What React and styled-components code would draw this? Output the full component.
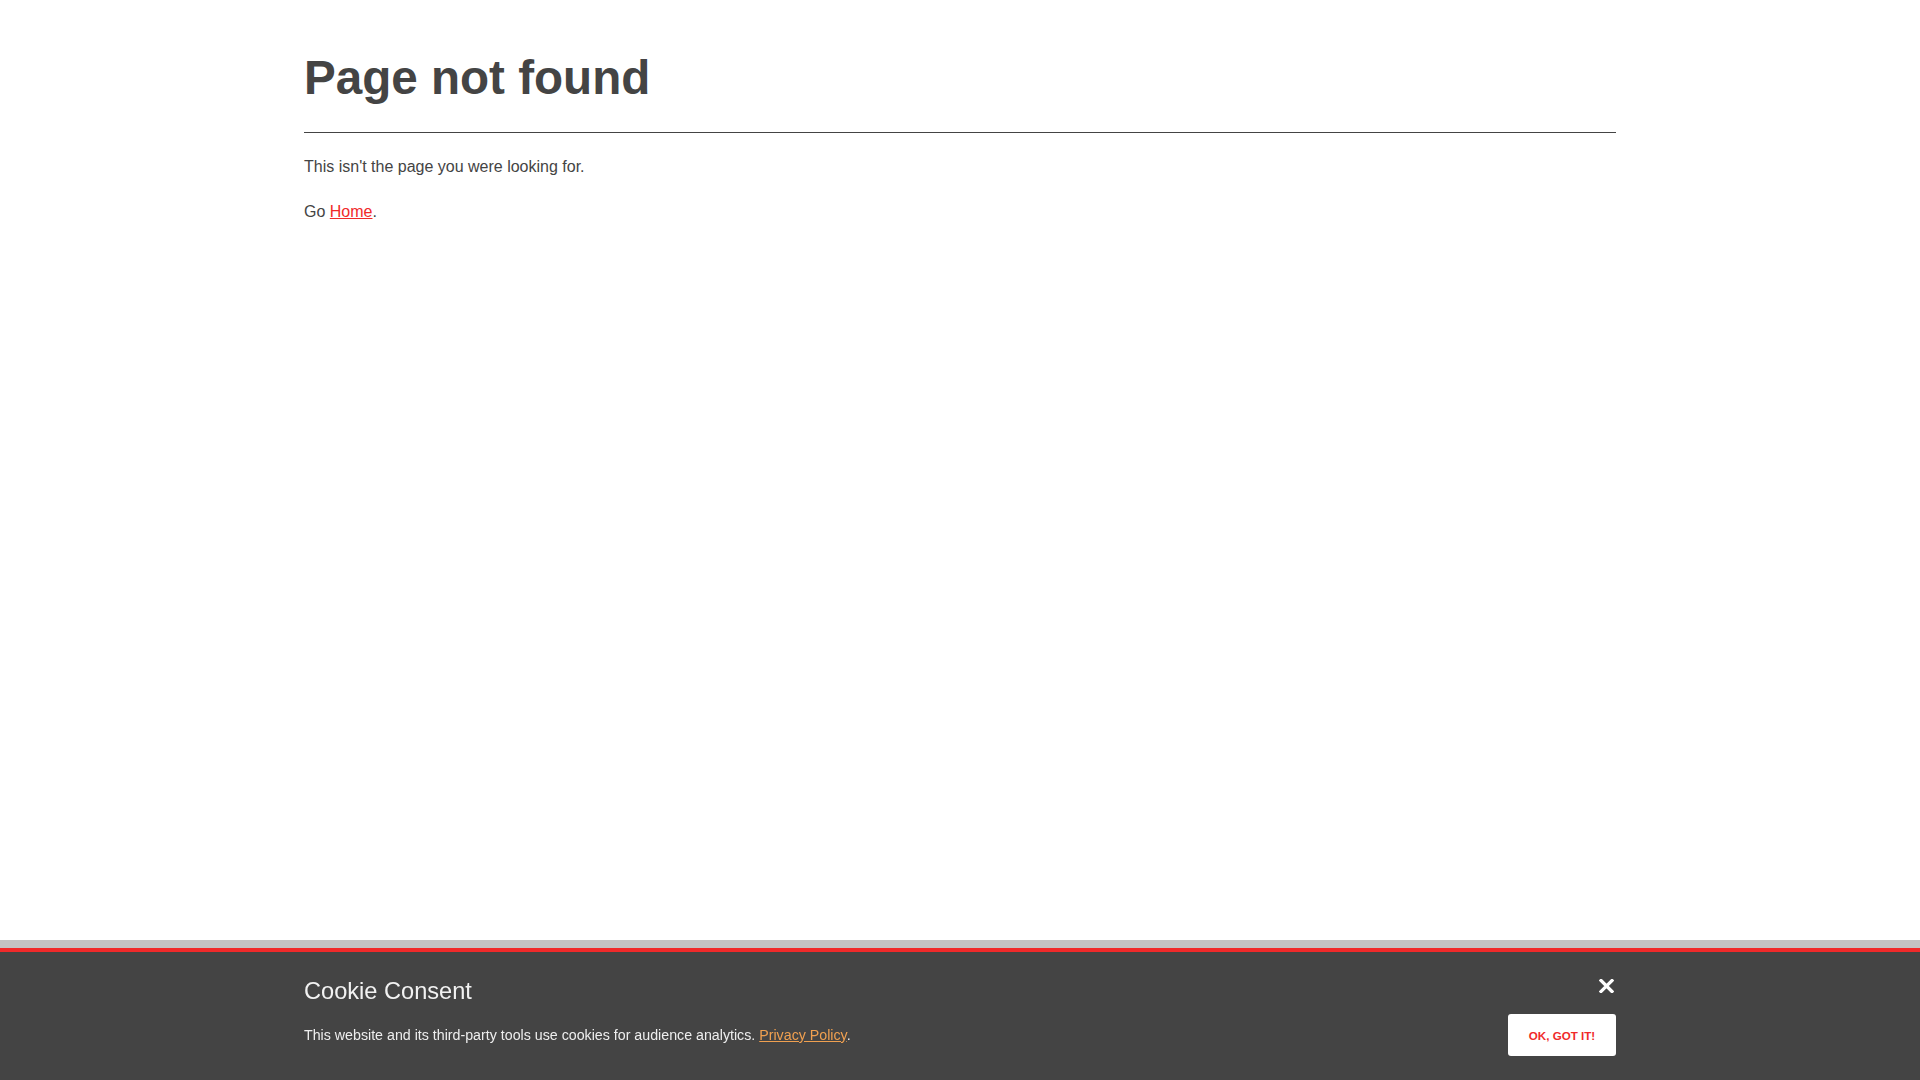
import React from 'react';
import styled, { createGlobalStyle } from 'styled-components';

const GlobalStyle = createGlobalStyle`
  html, body {
    margin: 0;
    padding: 0;
    background: #fff;
    font-family: 'Liberation Sans', Arial, sans-serif;
    color: #444;
  }
`;

const Page = styled.main`
  width: 1312px;
  margin: 0 auto;
  padding-top: 52px;
`;

const Title = styled.h1`
  margin: 0;
  padding-bottom: 28px;
  border-bottom: 1px solid #444;
  font-size: 47.6px;
  line-height: 1.1;
  font-weight: 700;
  color: #444;
`;

const Text = styled.p`
  margin: ${p => (p.first ? '22px 0 21px' : '0 0 21px')};
  font-size: 16px;
  line-height: 24px;
  color: #444;
`;

const Link = styled.a`
  color: #f02a2a;
  text-decoration: underline;
`;

const Banner = styled.div`
  position: fixed;
  left: 0;
  right: 0;
  bottom: 0;
  height: 128px;
  background: #444;
  border-top: 4px solid #f02a2a;
  box-shadow: 0 -8px 0 #c4c4c4;
`;

const BannerInner = styled.div`
  width: 1312px;
  margin: 0 auto;
  padding-top: 25px;
  display: flex;
  justify-content: space-between;
`;

const BannerText = styled.div`
  display: flex;
  flex-direction: column;
  gap: 19px;
`;

const BannerTitle = styled.h2`
  margin: 0;
  font-size: 23.6px;
  line-height: 28.8px;
  font-weight: 400;
  color: #f2f2f2;
`;

const BannerCopy = styled.p`
  margin: 0;
  font-size: 14.23px;
  line-height: 20px;
  color: #eee;
`;

const PolicyLink = styled.a`
  color: #f0a050;
  text-decoration: underline;
`;

const Actions = styled.div`
  display: flex;
  flex-direction: column;
  align-items: flex-end;
  gap: 19px;
`;

const Close = styled.button`
  width: 18px;
  height: 18px;
  margin-right: 1px;
  padding: 0;
  border: 0;
  background: none;
  display: flex;
  align-items: center;
  justify-content: center;
  cursor: pointer;
`;

const OkButton = styled.button`
  width: 108px;
  height: 42px;
  border: 0;
  border-radius: 3px;
  background: #fff;
  color: #f02a2a;
  font-family: 'Liberation Sans', Arial, sans-serif;
  font-size: 11.6px;
  font-weight: 700;
  text-transform: uppercase;
  cursor: pointer;
`;

export default function App() {
  return (
    <>
      <GlobalStyle />
      <Page>
        <Title>Page not found</Title>
        <Text first>This isn't the page you were looking for.</Text>
        <Text>
          Go <Link href="#">Home</Link>.
        </Text>
      </Page>
      <Banner>
        <BannerInner>
          <BannerText>
            <BannerTitle>Cookie Consent</BannerTitle>
            <BannerCopy>
              This website and its third-party tools use cookies for audience analytics.{' '}
              <PolicyLink href="#">Privacy Policy</PolicyLink>.
            </BannerCopy>
          </BannerText>
          <Actions>
            <Close aria-label="Close">
              <svg width="15" height="14" viewBox="0 0 15 14">
                <path d="M2 1.5 L13 12.5 M13 1.5 L2 12.5" stroke="#fff" strokeWidth="3.2" strokeLinecap="square" />
              </svg>
            </Close>
            <OkButton>OK, got it!</OkButton>
          </Actions>
        </BannerInner>
      </Banner>
    </>
  );
}
